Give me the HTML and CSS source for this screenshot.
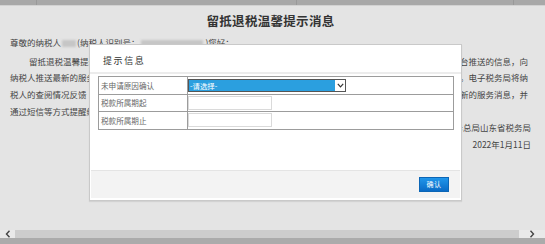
FILE: index.html
```html
<!DOCTYPE html>
<html lang="zh-CN">
<head>
<meta charset="utf-8">
<title>留抵退税温馨提示消息</title>
<link rel="stylesheet" href="styles.css">
</head>
<body>
<div class="topbar">
  <span class="seg seg-a"></span>
  <span class="seg seg-b"></span>
  <span class="seg seg-c"></span>
  <span class="seg seg-d"></span>
</div>
<main class="page">
  <h1 class="title">留抵退税温馨提示消息</h1>
  <div class="letter">
    <div class="greet">尊敬的纳税人<span class="blur blur-s"></span>(纳税人识别号：<span class="blur blur-l"></span>)您好：</div>
    <div class="line indent"><span>留抵退税温馨提示</span><span>台推送的信息，向</span></div>
    <div class="line"><span>纳税人推送最新的服务</span><span>。电子税务局将纳</span></div>
    <div class="line"><span>税人的查阅情况反馈</span><span>新的服务消息，并</span></div>
    <div class="line"><span>通过短信等方式提醒纳</span><span></span></div>
    <div class="sign">国家税务总局山东省税务局</div>
    <div class="sign">2022年1月11日</div>
  </div>
</main>
<div class="hscroll">
  <span class="sbtn sbtn-l"><svg width="6" height="8" viewBox="0 0 6 8"><path d="M4.5 0.8 L1.5 4 L4.5 7.2" fill="none" stroke="#444" stroke-width="1.4"/></svg></span>
  <span class="strack"></span>
  <span class="sbtn sbtn-r"><svg width="6" height="8" viewBox="0 0 6 8"><path d="M1.5 0.8 L4.5 4 L1.5 7.2" fill="none" stroke="#444" stroke-width="1.4"/></svg></span>
</div>
<div class="bottombar"></div>

<div class="modal">
  <div class="modal-head">提示信息</div>
  <div class="modal-sep"></div>
  <div class="modal-body">
    <table class="form">
      <tr>
        <td class="lbl">未申请原因确认</td>
        <td class="fld">
          <div class="select"><span class="sel-val">-请选择-</span><span class="sel-arrow"><svg width="7" height="5" viewBox="0 0 7 5"><path d="M0.8 0.8 L3.5 3.8 L6.2 0.8" fill="none" stroke="#333" stroke-width="1.2"/></svg></span></div>
        </td>
      </tr>
      <tr>
        <td class="lbl">税款所属期起</td>
        <td class="fld"><div class="input"></div></td>
      </tr>
      <tr>
        <td class="lbl">税款所属期止</td>
        <td class="fld"><div class="input"></div></td>
      </tr>
    </table>
  </div>
  <div class="modal-foot">
    <button class="btn" type="button">确认</button>
  </div>
</div>
</body>
</html>
```
FILE: styles.css
```css
* { box-sizing: border-box; }
html, body { margin: 0; padding: 0; }
body {
  width: 545px;
  height: 244px;
  overflow: hidden;
  background: #e4e4e4;
  font-family: "Noto Sans CJK SC", "Noto Sans", sans-serif;
  color: #444;
  display: flex;
  flex-direction: column;
  position: relative;
}
.topbar {
  height: 6px;
  display: flex;
  background: #a8a8a8;
  border-bottom: 1px solid #d2d2d2;
  flex: none;
}
.seg { height: 5px; border-right: 1px solid #999; }
.seg-a { width: 37px; }
.seg-b { width: 260px; }
.seg-c { width: 217px; }
.seg-d { flex: 1; border-right: 0; }

.page {
  flex: 1;
  padding: 0 14px 0 10px;
}
.title {
  margin: 6px 0 0;
  font-size: 12.5px;
  line-height: 17px;
  font-weight: bold;
  text-align: center;
  color: #333;
  letter-spacing: 0.3px;
}
.letter { font-size: 8.5px; color: #444; margin-top: 5px; }
.greet { line-height: 17px; margin-bottom: 1.6px; white-space: nowrap; }
.blur {
  display: inline-block;
  height: 7px;
  background: #c6c6c6;
  filter: blur(1px);
  vertical-align: -1px;
}
.blur-s { width: 14px; margin: 0 1px; }
.blur-l { width: 62px; margin: 0 2px; }
.line {
  line-height: 16.7px;
  display: flex;
  justify-content: space-between;
  padding-right: 3px;
  white-space: nowrap;
}
.line.indent { padding-left: 19px; }
.sign { line-height: 16.7px; text-align: right; }

.hscroll {
  height: 8px;
  display: flex;
  flex: none;
}
.sbtn {
  background: #e9e9e9;
  display: flex;
  align-items: center;
  justify-content: center;
}
.sbtn-l { width: 15px; }
.sbtn-r { width: 26px; }
.strack { flex: 1; background: #cdcdcd; }
.bottombar { height: 6px; background: #ababab; flex: none; }

.modal {
  position: absolute;
  left: 89px;
  top: 44px;
  width: 373px;
  height: 157px;
  background: #fff;
  border: 1px solid #c9c9c9;
  box-shadow: 0 1px 1px rgba(0,0,0,0.08);
  padding: 0 1px 1px 1px;
  display: flex;
  flex-direction: column;
}
.modal-head {
  height: 27px;
  padding: 2px 0 0 12px;
  font-size: 9px;
  line-height: 27px;
  letter-spacing: 1.6px;
  color: #333;
}
.modal-sep { height: 2px; background: #ececec; margin: 0 -1px; }
.modal-body { flex: 1; padding: 2px 6px 0 7px; }
.form {
  width: 100%;
  border-collapse: collapse;
  border: 1px solid #9c9c9c;
}
.form td {
  border: 1px solid #9c9c9c;
  height: 17.5px;
  padding: 0;
  vertical-align: middle;
}
.form .lbl {
  width: 89px;
  font-size: 7.6px;
  color: #666;
  padding-left: 2px;
  white-space: nowrap;
}
.select {
  width: 158px;
  height: 13px;
  border: 1px solid #555;
  display: flex;
  background: #fff;
}
.sel-val {
  flex: 1;
  background: #2b9fdf;
  color: #fff;
  font-size: 7.4px;
  line-height: 11px;
  padding-left: 1px;
}
.sel-arrow {
  width: 10px;
  display: flex;
  align-items: center;
  justify-content: center;
}
.input {
  width: 84px;
  height: 14px;
  border: 1px solid #dadada;
  background: #fff;
}
.modal-foot {
  height: 28px;
  background: #f3f3f3;
  border-top: 1px solid #e4e4e4;
  display: flex;
  justify-content: flex-end;
  align-items: center;
  padding-right: 11px;
  margin-bottom: 1px;
}
.btn {
  width: 30px;
  height: 15px;
  padding: 0;
  border: 1px solid #0c66b6;
  background: linear-gradient(#2196ea, #0a6bc6);
  color: #fff;
  font-family: "Noto Sans CJK SC", sans-serif;
  font-size: 7px;
  line-height: 13px;
  letter-spacing: 0.5px;
}
```
